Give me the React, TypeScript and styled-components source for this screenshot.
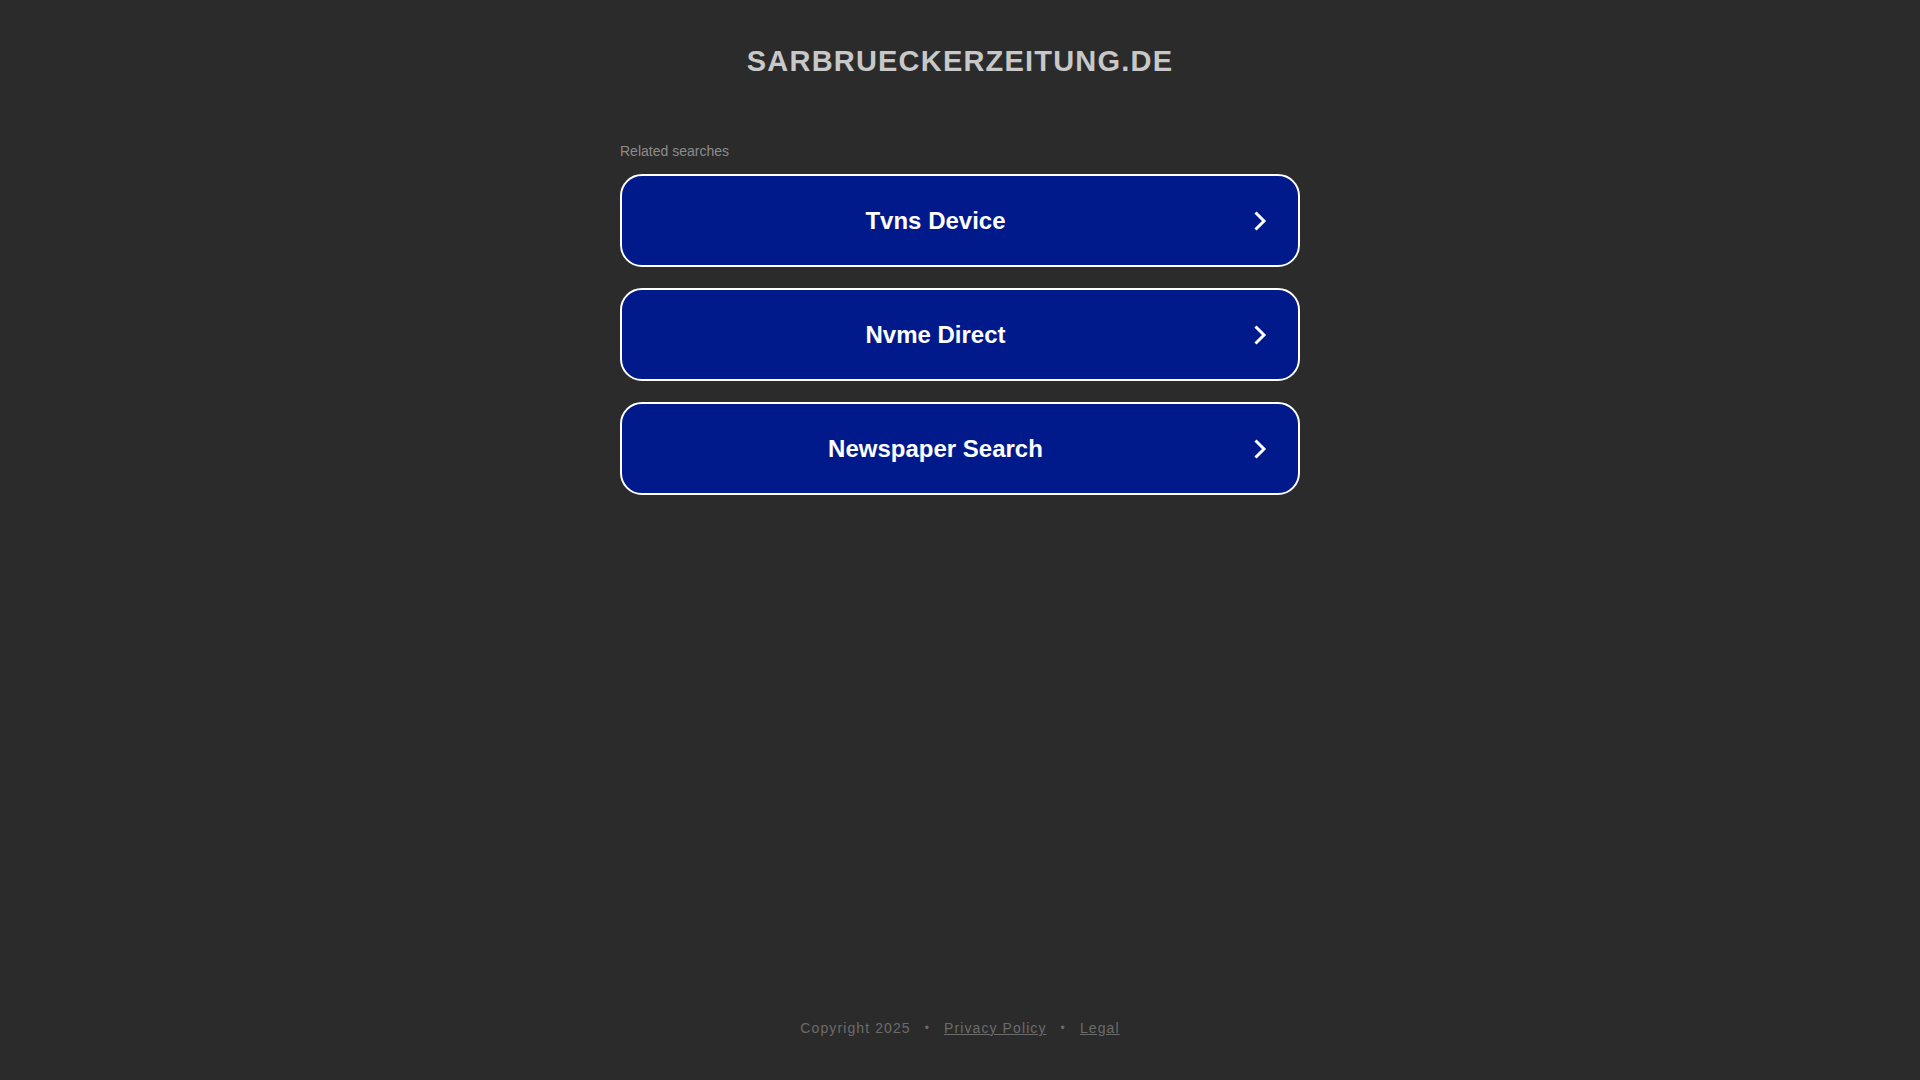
import * as React from 'react';
import styled, { createGlobalStyle } from 'styled-components';

const GlobalStyle = createGlobalStyle`
  html, body {
    margin: 0;
    padding: 0;
    background-color: #2b2b2b;
    font-family: "Liberation Sans", Arial, sans-serif;
  }
`;

const Page = styled.div`
  min-height: 100vh;
  display: flex;
  flex-direction: column;
  align-items: center;
`;

const Header = styled.h1`
  margin: 44px 0 0;
  font-size: 29px;
  line-height: 34px;
  font-weight: 700;
  letter-spacing: 1.2px;
  text-transform: uppercase;
  color: #c8c8c8;
`;

const Content = styled.div`
  width: 680px;
  margin-top: 65px;
  display: flex;
  flex-direction: column;
`;

const Label = styled.div`
  font-size: 14px;
  line-height: 16px;
  color: #8c8c8c;
  margin-bottom: 15px;
`;

const List = styled.div`
  display: flex;
  flex-direction: column;
  gap: 21px;
`;

const SearchLink = styled.a`
  box-sizing: border-box;
  height: 93px;
  display: flex;
  align-items: center;
  padding: 0 31px 0 36px;
  border: 2px solid #ffffff;
  border-radius: 22px;
  background-color: #011a8b;
  color: #ffffff;
  text-decoration: none;
  cursor: pointer;
`;

const SearchText = styled.span`
  flex: 1;
  margin-right: 40px;
  text-align: center;
  font-size: 24px;
  font-weight: 700;
`;

const Chevron = styled.svg`
  width: 14px;
  height: 22px;
  flex-shrink: 0;
`;

const Footer = styled.footer`
  margin-top: auto;
  padding-bottom: 44px;
  display: flex;
  align-items: center;
  gap: 14px;
  font-size: 14px;
  letter-spacing: 1.1px;
  color: #6b6b6b;
`;

const FooterLink = styled.a`
  color: #6b6b6b;
  text-decoration: underline;
`;

const Dot = styled.span`
  font-size: 12px;
`;

const searches = ['Tvns Device', 'Nvme Direct', 'Newspaper Search'];

export default function App(): JSX.Element {
  return (
    <>
      <GlobalStyle />
      <Page>
        <Header>sarbrueckerzeitung.de</Header>
        <Content>
          <Label>Related searches</Label>
          <List>
            {searches.map((s) => (
              <SearchLink key={s}>
                <SearchText>{s}</SearchText>
                <Chevron viewBox="0 0 14 22">
                  <path
                    d="M2.5 2.5 L11 11 L2.5 19.5"
                    fill="none"
                    stroke="#ffffff"
                    strokeWidth="3"
                  />
                </Chevron>
              </SearchLink>
            ))}
          </List>
        </Content>
        <Footer>
          <span>Copyright 2025</span>
          <Dot>•</Dot>
          <FooterLink>Privacy Policy</FooterLink>
          <Dot>•</Dot>
          <FooterLink>Legal</FooterLink>
        </Footer>
      </Page>
    </>
  );
}
